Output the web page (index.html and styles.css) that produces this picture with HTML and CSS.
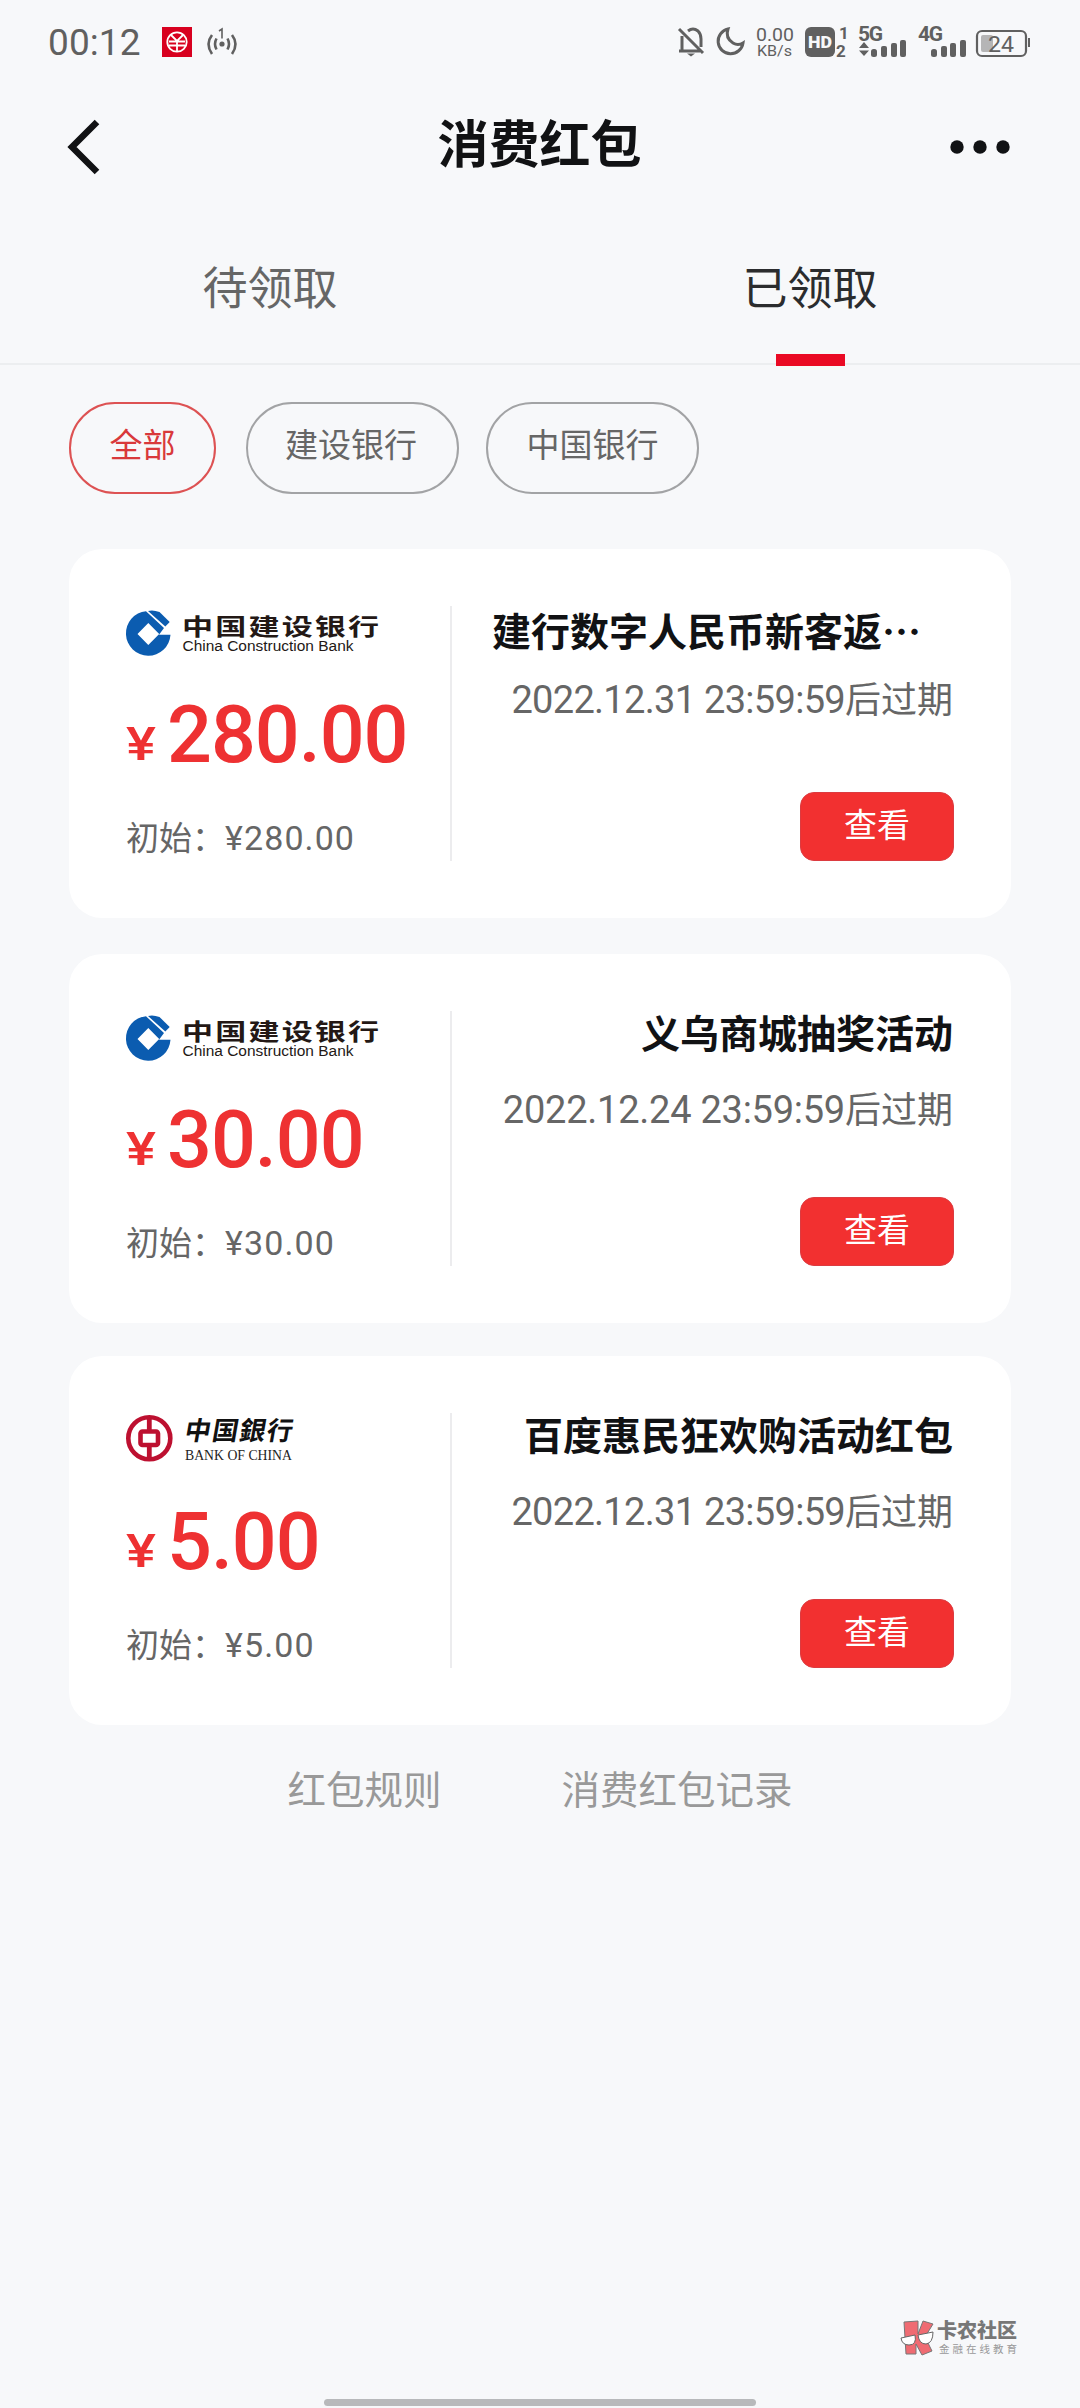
FILE: index.html
```html
<!DOCTYPE html>
<html lang="zh-CN">
<head>
<meta charset="utf-8">
<title>消费红包</title>
<link rel="stylesheet" href="styles.css">
</head>
<body>
<div class="status">
  <span class="clock">00:12</span>
  <svg class="app" width="30" height="30" viewBox="0 0 30 30" fill="none" stroke="#fff" stroke-width="1.800">
    <path d="M0 0H30V30H0Z" fill="#d8001f" stroke="none"/><circle cx="15" cy="15" r="9.700"/><path d="M9 8 15 14 21 8M15 14V25M7 14.500H23M7 18.500H23"/>
  </svg>
  <svg class="cast" width="32" height="30" viewBox="0 0 32 30" fill="none" stroke="#606060" stroke-width="2.600">
    <circle cx="16" cy="16" r="2.600" fill="#606060" stroke="none"/><path d="M10.500 10.500Q7.500 16 10.500 21.500M6 7Q-1 16 6 26M21.500 10.500Q24.500 16 21.500 21.500M26 7Q33 16 26 26"/><path d="M13 3 16 1V10.500" stroke-width="1.600"/>
  </svg>
  <svg class="indicators" width="372" height="40" viewBox="0 0 372 40" fill="none" stroke="#606060" stroke-width="3">
    <path d="M1 4 25 28M4 11V26H22M1 26H22M10 6Q15 2 20 6Q23 9 23 14V22"/><path d="M9 28.500H17L13 31.500Z" fill="#606060" stroke="none"/>
    <path d="M50 4A12.500 12.500 0 1 0 65 18Q60 21 55 18Q47 13 50 4Z"/>
    <g fill="#606060" stroke="none">
      <text class="rate" x="78" y="15.500" textLength="38" lengthAdjust="spacingAndGlyphs">0.00</text><text class="rate small" x="79" y="31" textLength="35" lengthAdjust="spacingAndGlyphs">KB/s</text>
      <rect x="127" y="2" width="30" height="30" rx="6"/>
      <text class="hd" x="130" y="23" textLength="24" lengthAdjust="spacingAndGlyphs">HD</text>
      <text class="sim" x="161" y="14">1</text><text class="sim" x="158" y="31.500">2</text>
      <text class="net" x="180" y="16" textLength="25">5G</text><text class="net" x="240" y="16" textLength="25">4G</text>
      <path d="M181 23 186 17 191 23ZM181 25.500H191L186 31Z"/>
      <rect x="193" y="24" width="6" height="8" rx="2.500"/><rect x="203" y="21" width="6" height="11" rx="2"/><rect x="213" y="18" width="6" height="14" rx="2"/><rect x="222" y="15" width="6" height="17" rx="2"/>
      <rect x="253" y="24" width="6" height="8" rx="2.500"/><rect x="263" y="21" width="6" height="11" rx="2"/><rect x="272" y="18" width="6" height="14" rx="2"/><rect x="282" y="15" width="6" height="17" rx="2"/>
      <rect x="303" y="10" width="12" height="17" rx="2" fill="#b5b5b6"/><rect x="350" y="13" width="2" height="9"/>
      <text class="level" x="310" y="27" textLength="26" lengthAdjust="spacingAndGlyphs">24</text>
    </g>
    <rect x="299" y="6" width="49" height="25" rx="5" stroke-width="2.200"/>
  </svg>
</div>

<header class="bar">
  <svg width="34" height="56" viewBox="0 0 34 56"><path d="M31 3 6 28 31 53" fill="none" stroke="#111214" stroke-width="6.500"/></svg>
  <h1>消费红包</h1>
  <svg width="62" height="56" viewBox="0 0 62 56" fill="#111214"><circle cx="8" cy="28" r="6.700"/><circle cx="31" cy="28" r="6.700"/><circle cx="54" cy="28" r="6.700"/></svg>
</header>

<nav class="tabs"><a class="tab">待领取</a><a class="tab active">已领取</a></nav>

<div class="filters"><span class="pill on">全部</span><span class="pill">建设银行</span><span class="pill last">中国银行</span></div>

<main class="cards">
  <section class="card first">
    <div class="money">
      <svg class="logo" width="260" height="50" viewBox="0 0 260 50">
        <path d="M20 3.200 38 20 33 26.800H44.500A22.300 22.300 0 1 1 20 3.200ZM22.300 15 11.500 26 22.300 37 33.200 26Z" fill="#0b5cb0" fill-rule="evenodd"/>
        <path d="M22 3Q27 1.500 33.500 4L43.700 14 39.300 18.500Z" fill="#0b5cb0"/>
        <text class="ccb-cn" transform="scale(1.350 1)" x="41.500" y="26.500" textLength="146">中国建设银行</text>
        <text class="ccb-en" x="56.500" y="43" textLength="171" lengthAdjust="spacingAndGlyphs">China Construction Bank</text>
      </svg>
      <p class="amount"><span class="yen">¥</span>280.00</p>
      <p class="origin">初始：<span class="num">¥280.00</span></p>
    </div>
    <div class="info">
      <h2>建行数字人民币新客返<span class="dots">⋯</span></h2>
      <p class="date"><span class="num">2022.12.31 23:59:59</span>后过期</p>
      <a class="btn">查看</a>
    </div>
  </section>
  <section class="card second">
    <div class="money">
      <svg class="logo" width="260" height="50" viewBox="0 0 260 50">
        <path d="M20 3.200 38 20 33 26.800H44.500A22.300 22.300 0 1 1 20 3.200ZM22.300 15 11.500 26 22.300 37 33.200 26Z" fill="#0b5cb0" fill-rule="evenodd"/>
        <path d="M22 3Q27 1.500 33.500 4L43.700 14 39.300 18.500Z" fill="#0b5cb0"/>
        <text class="ccb-cn" transform="scale(1.350 1)" x="41.500" y="26.500" textLength="146">中国建设银行</text>
        <text class="ccb-en" x="56.500" y="43" textLength="171" lengthAdjust="spacingAndGlyphs">China Construction Bank</text>
      </svg>
      <p class="amount"><span class="yen">¥</span>30.00</p>
      <p class="origin">初始：<span class="num">¥30.00</span></p>
    </div>
    <div class="info">
      <h2>义乌商城抽奖活动</h2>
      <p class="date"><span class="num">2022.12.24 23:59:59</span>后过期</p>
      <a class="btn">查看</a>
    </div>
  </section>
  <section class="card third">
    <div class="money">
      <svg class="logo" width="180" height="50" viewBox="0 0 180 50">
        <circle cx="23.300" cy="23.200" r="21" fill="none" stroke="#bd1030" stroke-width="4.600"/>
        <path d="M23.300 2V15.500M23.300 31V44" stroke="#bd1030" stroke-width="4.800"/>
        <rect x="14.500" y="16.500" width="17.500" height="13.500" rx="2" fill="none" stroke="#bd1030" stroke-width="4.600"/>
        <text class="boc-cn" transform="skewX(-10)" x="62" y="25" textLength="108">中国銀行</text>
        <text class="boc-en" x="59" y="45" textLength="107" lengthAdjust="spacingAndGlyphs">BANK OF CHINA</text>
      </svg>
      <p class="amount"><span class="yen">¥</span>5.00</p>
      <p class="origin">初始：<span class="num">¥5.00</span></p>
    </div>
    <div class="info">
      <h2>百度惠民狂欢购活动红包</h2>
      <p class="date"><span class="num">2022.12.31 23:59:59</span>后过期</p>
      <a class="btn">查看</a>
    </div>
  </section>
</main>

<div class="links"><a>红包规则</a><a>消费红包记录</a></div>

<footer class="foot">
  <svg class="mark" width="120" height="42" viewBox="0 0 120 42">
    <path d="M4 3 18 2V15L23 2 33 5 25 18 32 32 22 36 16 25V35H6Z" fill="#ef6b72" stroke="#777" stroke-width="1"/>
    <path d="M1 19 15 16Q17 26 9 26Q2 26 1 19ZM18 16 33 13Q33 24 26 25Q19 25 18 16Z" fill="#fff" stroke="#666"/>
    <text class="mark-cn" x="37" y="19" textLength="80">卡农社区</text><text class="mark-sub" x="39" y="34" textLength="78">金融在线教育</text>
  </svg>
  <div class="home"></div>
</footer>
</body>
</html>
```
FILE: styles.css
```css
* { box-sizing: border-box; }
body { margin: 0; width: 1080px; height: 2408px; background: #f7f8fa; color: #111214; font-family: Roboto, "Noto Sans CJK SC", sans-serif; display: flex; flex-direction: column; overflow: hidden; }
h1, h2, p { margin: 0; }
svg { display: block; flex: none; overflow: visible; }

.status { height: 100px; padding: 25px 30px 0 48px; display: flex; align-items: flex-start; }
.clock { width: 114px; font-size: 37px; line-height: 36px; letter-spacing: .1px; color: #606060; white-space: nowrap; }
.app { margin-top: 2px; }
.cast { margin: 3px 0 0 14px; }
.indicators { margin-left: auto; }
.rate { font: 18px Roboto, sans-serif; }
.small { font-size: 15px; }
.hd { font: 900 17px Roboto, sans-serif; fill: #f7f8fa; }
.sim { font: bold 17px Roboto, sans-serif; }
.net { font: bold 21px Roboto, sans-serif; }
.level { font: 22px Roboto, sans-serif; }

.bar { height: 94px; padding: 0 69px 0 66px; display: flex; align-items: center; justify-content: space-between; }
.bar h1 { font-size: 51px; line-height: 60px; font-weight: 700; margin: -3px -30px 0 0; }

.tabs { height: 171px; display: flex; border-bottom: 2px solid #eceef0; }
.tab { flex: 1; display: flex; flex-direction: column; align-items: center; padding-top: 69px; font-size: 45px; line-height: 54px; color: #666; }
.tab.active { color: #2b2c2e; }
.tab.active::after { content: ""; flex: none; width: 69px; height: 12px; margin-top: 37px; background: #ea0a24; }

.filters { height: 129px; padding: 37px 0 0 69px; display: flex; gap: 30px; }
.pill { height: 92px; width: 147px; border: 2px solid #a2a3a5; border-radius: 46px; font-size: 33px; line-height: 84px; text-align: center; color: #666; }
.pill + .pill { width: 213px; padding-right: 3px; }
.pill.last { margin-left: -3px; padding-right: 0; }
.pill.on { border-color: #dd5253; color: #d9393b; }

.cards { padding: 55px 69px 0; display: flex; flex-direction: column; gap: 36px; }
.card { height: 369px; border-radius: 33px; background: #fff; padding: 57px; display: flex; justify-content: space-between; }
.third { margin-top: -3px; }
.money { width: 326px; height: 255px; border-right: 2px solid #ececee; }
.logo { margin-top: 2px; }
.amount { height: 80px; margin-top: 37px; font-size: 79px; line-height: 80px; font-weight: 500; color: #ee3132; white-space: nowrap; letter-spacing: -1px; }
.yen { display: inline-block; width: 29px; margin-right: 12px; font-size: 47px; transform: translateY(-2px) scaleX(1.200); transform-origin: 0 50%; }
.origin { margin-top: 43px; font-size: 33px; line-height: 40px; color: #666; white-space: nowrap; }
.origin .num { font-size: 34px; letter-spacing: 1.100px; }
.info { width: 460px; display: flex; flex-direction: column; align-items: flex-end; white-space: nowrap; }
h2 { width: 461px; margin-right: 1px; font-size: 39px; line-height: 48px; font-weight: 700; text-align: right; }
.first h2 { margin-top: -1px; text-align: left; }
.dots { font-family: "Noto Sans CJK SC", sans-serif; }
.date { margin: 29px 1px 0 0; font-size: 36px; line-height: 44px; color: #666; }
.first .date { margin-top: 21px; }
.date .num { font-size: 38px; letter-spacing: -.7px; }
.second .date .num { letter-spacing: -.25px; }
.btn { margin-top: auto; width: 154px; height: 69px; border-radius: 14px; background: #f23030; border: 1px solid #dc3b40; color: #fff; font-size: 33px; line-height: 66px; text-align: center; }

.ccb-cn { font: 700 23px "Noto Sans CJK SC", sans-serif; fill: #231815; }
.ccb-en { font: 15.500px "Liberation Sans", sans-serif; fill: #231815; }
.boc-cn { font: 700 26px "Noto Sans CJK SC", sans-serif; fill: #111; }
.boc-en { font: 14.500px "Liberation Serif", serif; fill: #222; }

.links { display: flex; justify-content: center; gap: 120px; margin-top: 42px; font-size: 38.500px; line-height: 48px; color: #999; }
.foot { margin-top: auto; display: flex; flex-direction: column; align-items: center; }
.mark { align-self: flex-end; margin: 0 60px 38px 0; }
.mark-cn { font: 900 20px "Noto Sans CJK SC", sans-serif; fill: #777; }
.mark-sub { font: 10.500px "Noto Sans CJK SC", sans-serif; fill: #999; }
.home { width: 432px; height: 7px; border-radius: 4px; background: #b8b9bb; margin-bottom: 2px; }
```
